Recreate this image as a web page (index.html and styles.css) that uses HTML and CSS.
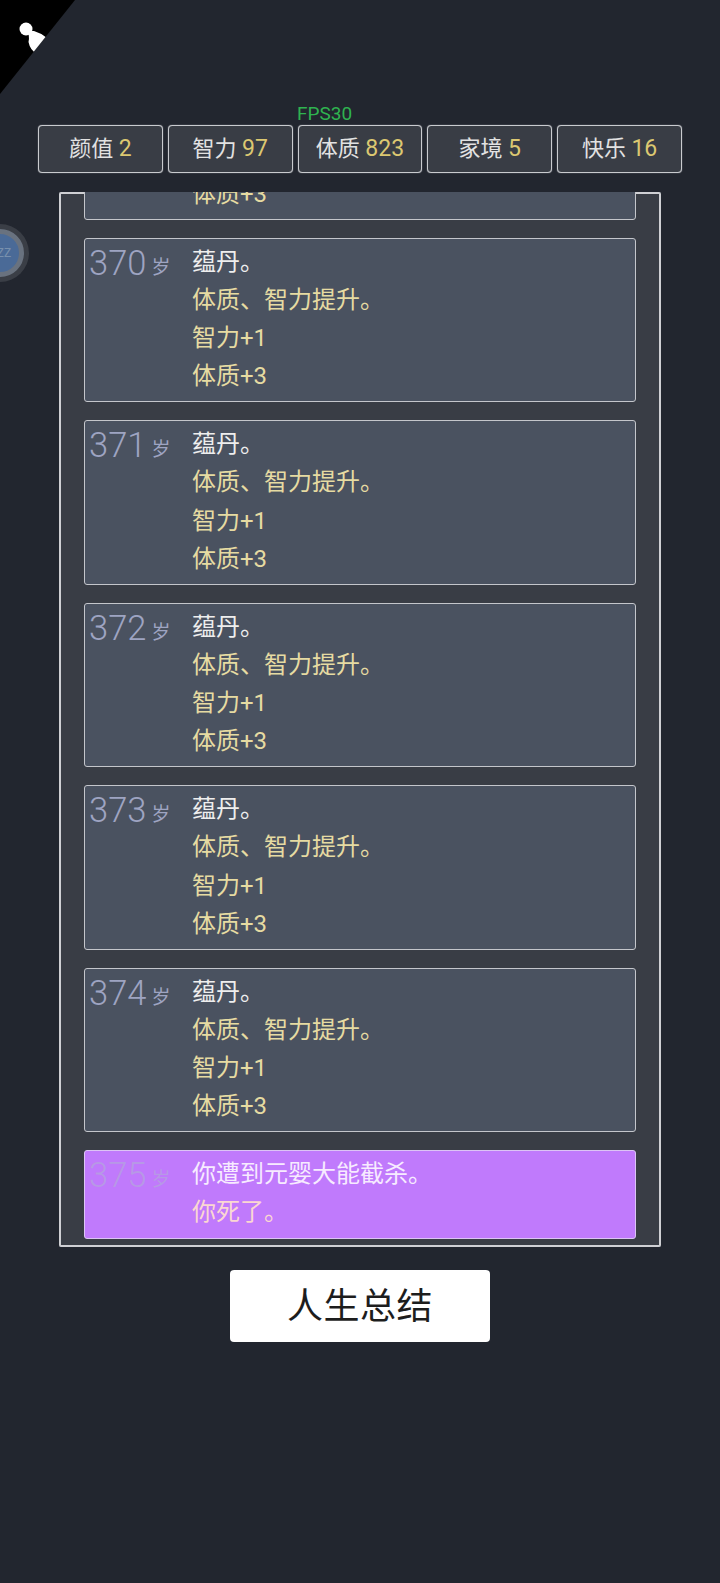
FILE: index.html
```html
<!DOCTYPE html>
<html lang="zh">
<head>
<meta charset="utf-8">
<title>人生重开</title>
<link rel="stylesheet" href="styles.css">
</head>
<body>
<div class="corner">
  <svg class="pawn" viewBox="0 0 30 34" width="30" height="34"><circle cx="7" cy="7" r="6.500" fill="#fff"/><path d="M8 9 L15 9 Q22 11 28 16 L18 32 Q11 28 9.500 20 Q11 14 8 9Z" fill="#fff"/></svg>
</div>
<div class="fps">FPS30</div>
<div class="float-ball"><div class="ball-ring"><span class="ball-text">ZZ</span></div></div>
<main class="page">
  <section class="stats">
    <div class="stat">颜值 <span class="num">2</span></div>
    <div class="stat">智力 <span class="num">97</span></div>
    <div class="stat">体质 <span class="num">823</span></div>
    <div class="stat">家境 <span class="num">5</span></div>
    <div class="stat">快乐 <span class="num">16</span></div>
  </section>
  <section class="panel">
    <div class="item">
      <div class="age"><span class="age-num">369</span><span class="age-unit">岁</span></div>
      <div class="lines"><p class="line first">蕴丹。</p><p class="line">体质、智力提升。</p><p class="line">智力+1</p><p class="line">体质+3</p></div>
    </div>
    <div class="item">
      <div class="age"><span class="age-num">370</span><span class="age-unit">岁</span></div>
      <div class="lines"><p class="line first">蕴丹。</p><p class="line">体质、智力提升。</p><p class="line">智力+1</p><p class="line">体质+3</p></div>
    </div>
    <div class="item">
      <div class="age"><span class="age-num">371</span><span class="age-unit">岁</span></div>
      <div class="lines"><p class="line first">蕴丹。</p><p class="line">体质、智力提升。</p><p class="line">智力+1</p><p class="line">体质+3</p></div>
    </div>
    <div class="item">
      <div class="age"><span class="age-num">372</span><span class="age-unit">岁</span></div>
      <div class="lines"><p class="line first">蕴丹。</p><p class="line">体质、智力提升。</p><p class="line">智力+1</p><p class="line">体质+3</p></div>
    </div>
    <div class="item">
      <div class="age"><span class="age-num">373</span><span class="age-unit">岁</span></div>
      <div class="lines"><p class="line first">蕴丹。</p><p class="line">体质、智力提升。</p><p class="line">智力+1</p><p class="line">体质+3</p></div>
    </div>
    <div class="item">
      <div class="age"><span class="age-num">374</span><span class="age-unit">岁</span></div>
      <div class="lines"><p class="line first">蕴丹。</p><p class="line">体质、智力提升。</p><p class="line">智力+1</p><p class="line">体质+3</p></div>
    </div>
    <div class="item item-death">
      <div class="age"><span class="age-num">375</span><span class="age-unit">岁</span></div>
      <div class="lines"><p class="line first">你遭到元婴大能截杀。</p><p class="line">你死了。</p></div>
    </div>
  </section>
  <button class="summary" type="button">人生总结</button>
</main>
</body>
</html>
```
FILE: styles.css
```css
* { box-sizing: border-box; }
html, body { margin: 0; height: 100%; }
body {
  background: #22262f;
  font-family: "Roboto", "Noto Sans CJK SC", sans-serif;
  overflow: hidden;
  position: relative;
}
.page {
  display: flex;
  flex-direction: column;
  align-items: center;
  padding-top: 125px;
}
.stats {
  display: flex;
  gap: 5px;
  width: 644px;
}
.stat {
  flex: 1;
  height: 48px;
  line-height: 45px;
  text-align: center;
  background: #393d45;
  border: 1px solid #c9cbcf;
  border-radius: 4px;
  box-shadow: 0 0 1px #c9cbcf;
  color: #e2e2e2;
  font-size: 22px;
}
.num { color: #dcc871; font-size: 23px; }
.panel {
  position: relative;
  width: 602px;
  height: 1055px;
  margin-top: 19px;
  padding: 0 25px 8px;
  display: flex;
  flex-direction: column;
  justify-content: flex-end;
  gap: 18px;
  background: #393d45;
  overflow: hidden;
}
.panel::before {
  content: "";
  position: absolute;
  inset: 0;
  border: 2px solid #cfd0d4;
  border-radius: 2px;
}
.item {
  position: relative;
  flex: none;
  display: flex;
  height: 164.500px;
  padding-top: 4px;
  background: #4a5260;
  border: 1px solid #c4c6cb;
  border-radius: 3px;
}
.item-death {
  height: 89px;
  background: #c07afc;
  border-color: #dcc4f5;
}
.age {
  flex: none;
  width: 107px;
  padding-left: 4px;
  color: #9ea4c2;
  height: 40px;
  display: flex;
  align-items: baseline;
  line-height: 40px;
}
.age-num { font-size: 34.500px; font-weight: 300; }
.age-unit { font-size: 19px; margin-left: 5px; position: relative; top: -1px; }
.item-death .age { color: #b798e6; }
.lines { flex: 1; }
.line {
  margin: 0;
  height: 38.300px;
  line-height: 38px;
  font-size: 24px;
  color: #e6dba2;
}
.line.first { color: #eeeeee; }
.item-death .line { color: #fbd7d2; }
.item-death .line.first { color: #f7ebff; }
.summary {
  width: 260px;
  height: 72px;
  margin-top: 23px;
  padding: 0 0 6px;
  background: #fff;
  border: 0;
  border-radius: 4px;
  color: #1d1d1d;
  font-family: "Noto Sans CJK SC", sans-serif;
  font-size: 36px;
  letter-spacing: 0.500px;
}
.corner {
  position: absolute;
  left: 0;
  top: 0;
  width: 75px;
  height: 94px;
  background: #000;
  clip-path: polygon(0 0, 100% 0, 0 100%);
}
.pawn { position: absolute; left: 19px; top: 22px; }
.fps {
  position: absolute;
  left: 297px;
  top: 103px;
  color: #2fb350;
  font-size: 19px;
  line-height: 22px;
}
.float-ball {
  position: absolute;
  left: -29px;
  top: 224px;
  width: 58px;
  height: 58px;
  border-radius: 50%;
  background: #3a3e46;
  display: flex;
  align-items: center;
  justify-content: center;
}
.ball-ring {
  width: 48px;
  height: 48px;
  border-radius: 50%;
  background: #4a6a97;
  border: 5px solid #69727f;
  display: flex;
  align-items: center;
  justify-content: center;
}
.ball-text { color: #7890ad; font-size: 12px; margin-left: 8px; }
```
